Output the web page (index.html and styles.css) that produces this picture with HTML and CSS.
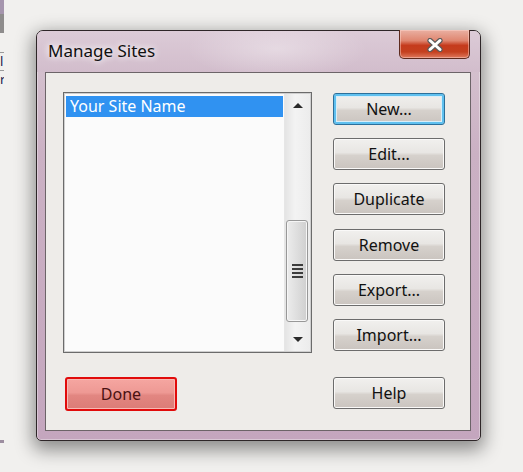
FILE: index.html
```html
<!DOCTYPE html>
<html>
    <head>
        <meta charset="UTF-8">
        <title>Manage Sites</title>
        <link rel="stylesheet" href="styles.css">
    </head>
    <body>
        <div class="behind">
            <div class="behind-top"></div>
            <div class="behind-grey"></div>
            <div class="behind-row"><span>l</span></div>
            <div class="behind-row"><span>r</span></div>
            <div class="behind-bottom"></div>
        </div>

        <div class="window">
            <div class="titlebar">
                <span class="title">Manage Sites</span>
                <div class="close">
                    <svg width="20" height="14" viewBox="0 0 20 14">
                        <path d="M5 2.5 L15 11.5 M15 2.5 L5 11.5" stroke="#5a5a5a" stroke-width="5.2" stroke-linecap="round"/>
                        <path d="M5 2.5 L15 11.5 M15 2.5 L5 11.5" stroke="#ffffff" stroke-width="3" stroke-linecap="round"/>
                    </svg>
                </div>
            </div>
            <div class="frame">
                <div class="panel">
                    <div class="listbox">
                        <ul class="items">
                            <li class="on">Your Site Name</li>
                        </ul>
                        <div class="scrollbar">
                            <div class="arrow up"></div>
                            <div class="track">
                                <div class="thumb">
                                    <div class="grip"><i></i><i></i><i></i><i></i></div>
                                </div>
                            </div>
                            <div class="arrow down"></div>
                        </div>
                    </div>
                    <div class="buttons">
                        <div class="btn focus">New...</div>
                        <div class="btn">Edit...</div>
                        <div class="btn">Duplicate</div>
                        <div class="btn">Remove</div>
                        <div class="btn">Export...</div>
                        <div class="btn">Import...</div>
                    </div>
                    <div class="done-cell">
                        <div class="btn done">Done</div>
                    </div>
                    <div class="btn">Help</div>
                </div>
            </div>
        </div>
    </body>
</html>
```

FILE: styles.css
```css
html,body{margin:0;padding:0;}
body{
    position: relative;
    width: 523px;
    height: 472px;
    overflow: hidden;
    background-color: #f1f0ee;
    font-family: "Noto Sans","DejaVu Sans",sans-serif;
    color: #111111;
}
ul,li{margin:0;padding:0;list-style:none;}

/* window behind, cut off on the left */
.behind{
    position: absolute;
    left: 0;
    top: 0;
    width: 4px;
    height: 472px;
}
.behind-top{height: 14px;background-color: #a595ad;}
.behind-grey{height: 19px;background-color: #8e8c8c;margin-bottom: 19px;}
.behind-row{
    height: 17px;
    border-top: 1px solid #9a9a9a;
    font-size: 13px;
    line-height: 16px;
    color: #1a2050;
    overflow: hidden;
}
.behind-row span{display: block;margin-left: 0;}
.behind-bottom{
    margin-top: 352px;
    height: 3px;
    background-color: #9d8ea0;
}

/* dialog window */
.window{
    position: absolute;
    left: 36px;
    top: 30px;
    width: 445px;
    height: 411px;
    box-sizing: border-box;
    display: flex;
    flex-direction: column;
    border: 1px solid #2e2628;
    border-radius: 7px 7px 5px 5px;
    background: linear-gradient(180deg,#d8c7d2 0%,#cbb1c4 30%,#c4a6be 100%);
    box-shadow: 0 6px 18px 3px rgba(0,0,0,0.42), inset 0 0 0 1px rgba(255,255,255,0.35);
}
.titlebar{
    height: 41px;
    display: flex;
    justify-content: space-between;
    align-items: flex-start;
    padding-left: 11px;
    padding-right: 10px;
    border-radius: 6px 6px 0 0;
    background:
        radial-gradient(ellipse 90px 30px at 240px 18px,rgba(255,255,255,0.35),rgba(255,255,255,0)),
        linear-gradient(180deg,#dccbd7 0%,#d2bdcc 100%);
}
.title{
    margin-top: 8px;
    font-size: 17px;
    line-height: 24px;
    color: #101010;
    text-shadow: 0 0 6px #ffffff,0 0 10px rgba(255,255,255,0.8);
}
.close{
    width: 69px;
    height: 28px;
    margin-top: -1px;
    display: flex;
    align-items: center;
    justify-content: center;
    border: 1px solid #5d2a1e;
    border-top: none;
    border-radius: 0 0 5px 5px;
    background: linear-gradient(180deg,#eab0a2 0%,#df8670 38%,#c53b1d 55%,#c4401f 78%,#df7a5e 100%);
    box-shadow: inset 0 0 0 1px rgba(255,220,210,0.45);
}
.close svg{margin-top: 1px;}

.frame{
    flex: 1;
    padding: 0 9px 9px 8px;
}
.panel{
    height: 100%;
    box-sizing: border-box;
    border: 1px solid #6c6468;
    background-color: #eeece9;
    padding: 19px 0 0 17px;
    display: grid;
    grid-template-columns: 249px 112px;
    grid-template-rows: 261px auto;
    column-gap: 21px;
    row-gap: 24px;
    align-items: start;
}

/* list box */
.listbox{
    height: 261px;
    box-sizing: border-box;
    display: flex;
    border: 1px solid #6b6b6b;
    background-color: #fbfbfb;
    box-shadow: inset 0 0 0 1px #cfcfcf;
}
.items{
    flex: 1;
    padding: 3px 1px 0 2px;
}
.items li{
    height: 21px;
    line-height: 21px;
    padding-left: 4px;
    font-size: 16px;
    color: #111111;
}
.items li.on{
    background-color: #3092f1;
    color: #ffffff;
}
.scrollbar{
    width: 25px;
    margin: 1px 1px 1px 0;
    display: flex;
    flex-direction: column;
    background: linear-gradient(90deg,#e4e4e4 0%,#f3f3f3 40%,#ececec 100%);
    border-left: 1px solid #e6e6e6;
}
.arrow{
    height: 24px;
    display: flex;
    align-items: center;
    justify-content: center;
}
.arrow::after{
    content: "";
    border-left: 5px solid transparent;
    border-right: 5px solid transparent;
}
.arrow.up::after{border-bottom: 5px solid #2a2a2a;}
.arrow.down::after{border-top: 5px solid #2a2a2a;}
.track{
    flex: 1;
    padding-top: 103px;
    padding-bottom: 7px;
}
.thumb{
    height: 102px;
    margin: 0 2px 0 1px;
    box-sizing: border-box;
    border: 1px solid #989898;
    border-radius: 3px;
    background: linear-gradient(90deg,#ececec 0%,#dedede 50%,#cfcfcf 100%);
    box-shadow: inset 0 0 0 1px #f6f6f6;
    display: flex;
    align-items: center;
    justify-content: center;
}
.grip{
    width: 11px;
    display: flex;
    flex-direction: column;
    gap: 2px;
}
.grip i{
    display: block;
    height: 2px;
    background-color: #3c3c3c;
}

/* buttons */
.buttons{
    display: flex;
    flex-direction: column;
    gap: 13.2px;
    padding-top: 1px;
}
.btn{
    height: 32px;
    box-sizing: border-box;
    display: flex;
    align-items: center;
    justify-content: center;
    border: 1px solid #6c6c6c;
    border-radius: 3px;
    font-size: 16px;
    color: #111111;
    background: linear-gradient(180deg,#f1f0ee 0%,#e8e6e3 45%,#d6d1cc 55%,#cac4bf 100%);
    box-shadow: inset 0 0 0 1px #faf9f8;
}
.btn.focus{
    border-color: #2c6f9a;
    box-shadow: inset 0 0 0 2px #5fc0ef,inset 0 0 0 3px #d9eef8;
}
.done-cell{
    padding-left: 2px;
}
.btn.done{
    width: 112px;
    height: 34px;
    border: 2px solid #e10b0b;
    color: #4a1111;
    background: linear-gradient(180deg,#f5a6a1 0%,#ee9994 45%,#e28681 55%,#dc7c77 100%);
    box-shadow: inset 0 0 0 1px #f7b8b3;
}
```
